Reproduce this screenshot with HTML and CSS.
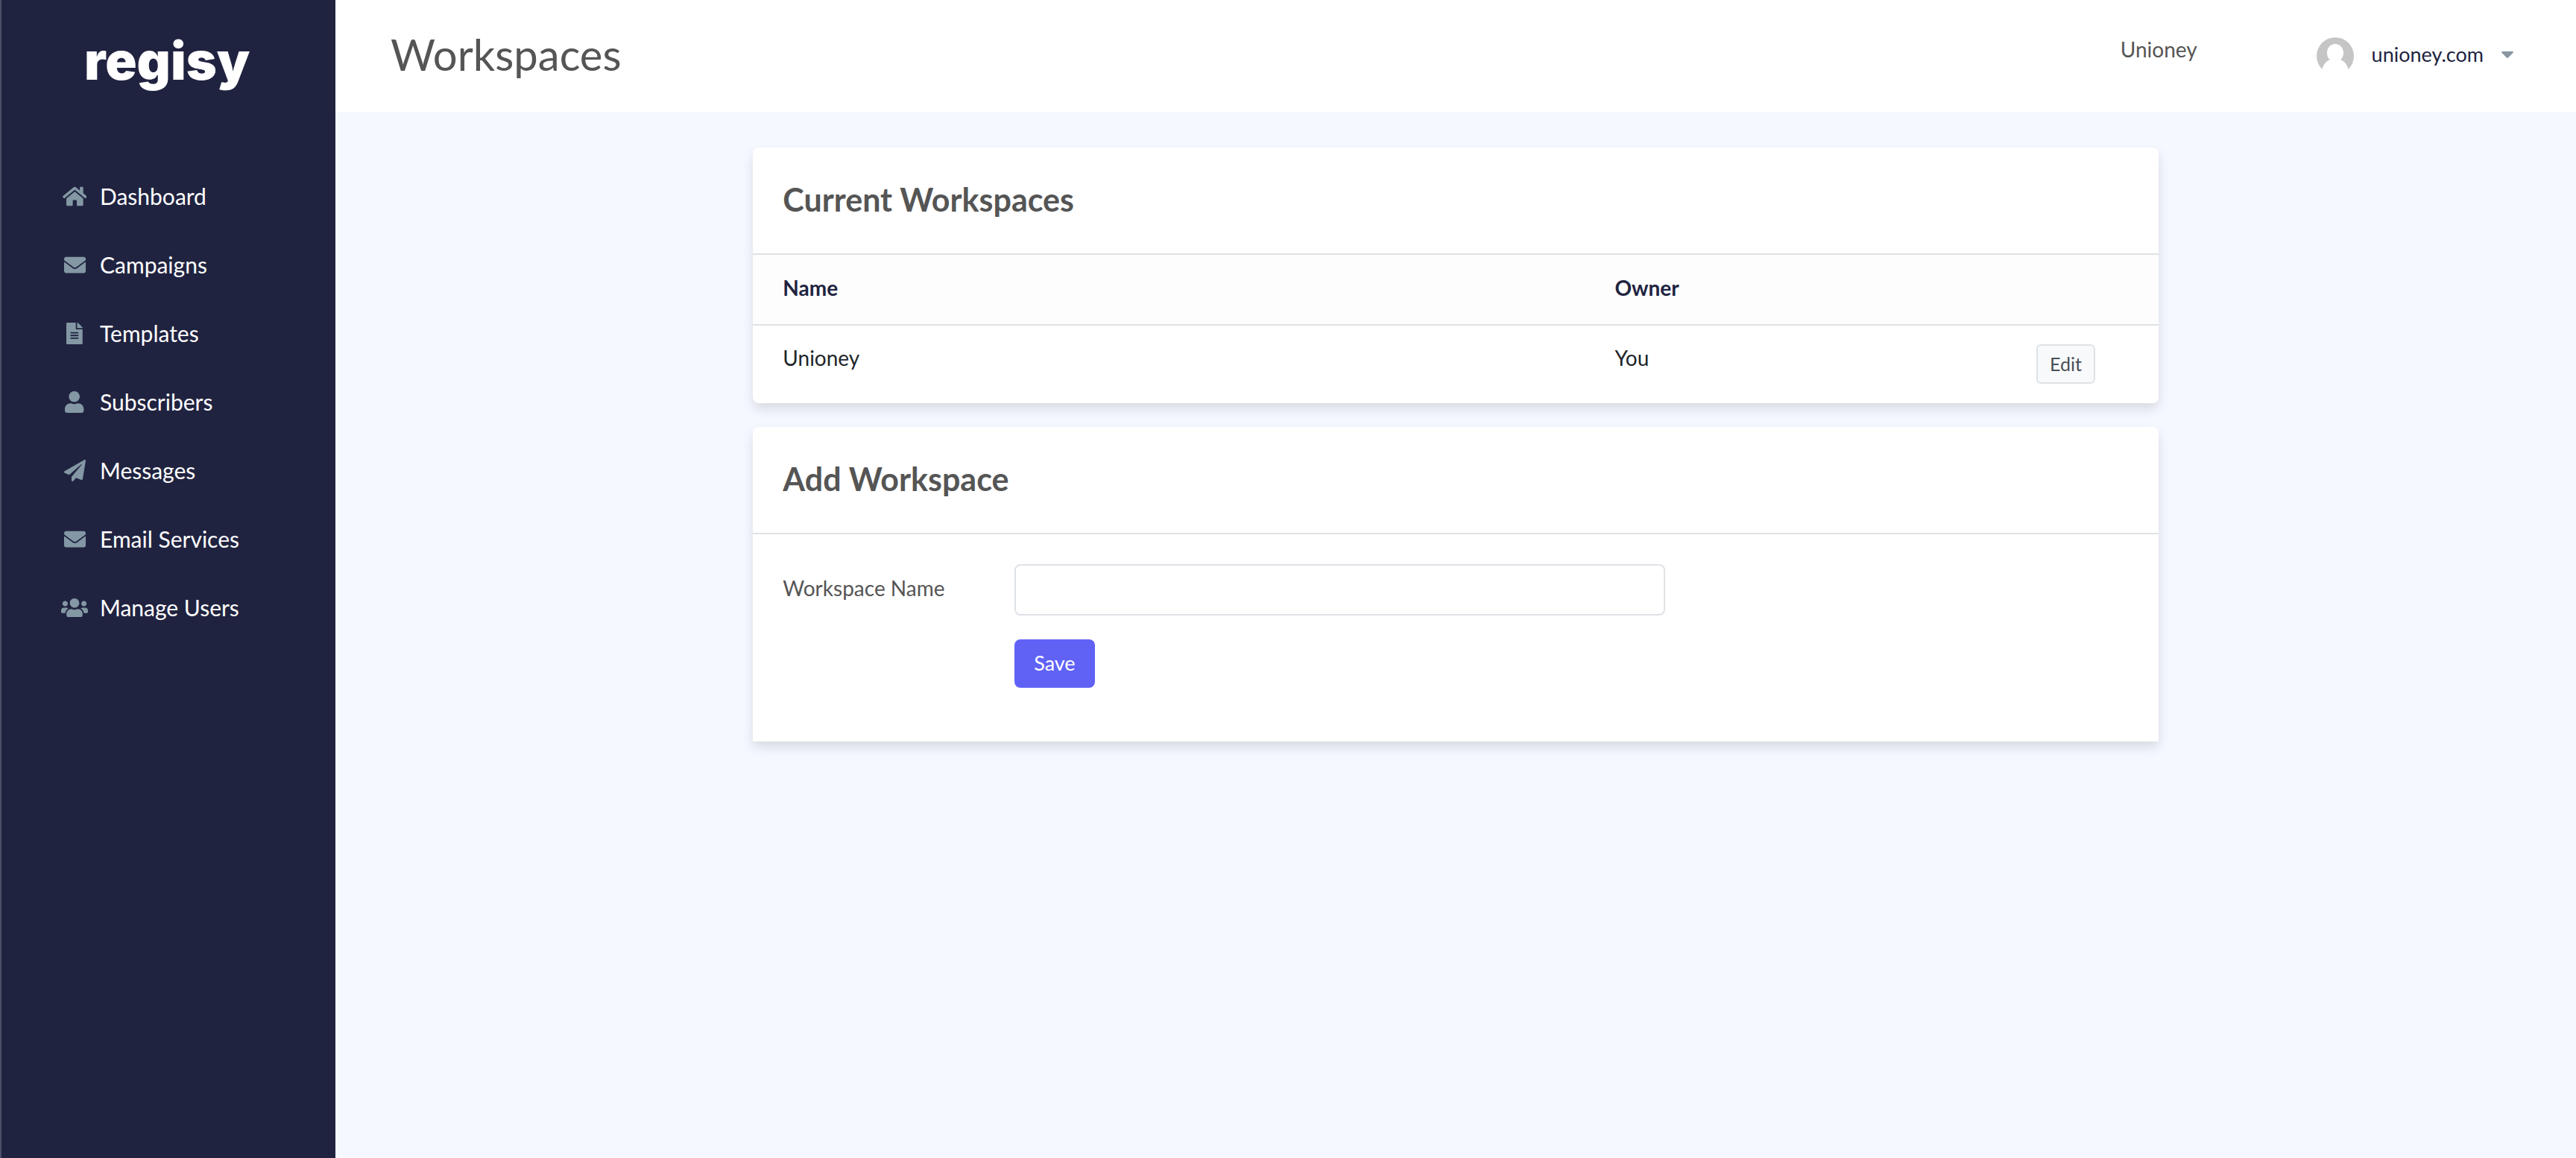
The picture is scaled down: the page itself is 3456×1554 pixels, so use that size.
FILE: index.html
```html
<!DOCTYPE html>
<html lang="en">
<head>
<meta charset="utf-8">
<title>Workspaces</title>
<link rel="stylesheet" href="styles.css">
</head>
<body>
<div class="app">
  <aside class="sidebar">
    <a class="logo" href="#">regisy</a>
    <nav class="nav">
      <a class="nav-link" href="#"><span class="nav-icon"><svg viewBox="0 0 576 512"><path d="M488 312.7V456c0 13.3-10.7 24-24 24H348c-6.600 0-12-5.400-12-12V356c0-6.600-5.400-12-12-12h-72c-6.600 0-12 5.400-12 12v112c0 6.600-5.400 12-12 12H112c-13.300 0-24-10.700-24-24V312.700c0-3.600 1.600-7 4.400-9.300l188-154.800c4.400-3.600 10.800-3.600 15.300 0l188 154.800c2.700 2.300 4.300 5.700 4.300 9.300zm83.600-60.900L488 182.900V44.400c0-6.600-5.400-12-12-12h-56c-6.600 0-12 5.400-12 12V117l-89.500-73.700c-17.700-14.600-43.300-14.600-61 0L4.400 251.800c-5.100 4.200-5.800 11.800-1.600 16.900l25.500 31c4.200 5.100 11.800 5.800 16.900 1.600l235.200-193.700c4.400-3.600 10.800-3.600 15.300 0l235.200 193.700c5.100 4.200 12.700 3.500 16.900-1.600l25.500-31c4.200-5.200 3.400-12.700-1.700-16.900z"/></svg></span>Dashboard</a>
      <a class="nav-link" href="#"><span class="nav-icon"><svg viewBox="0 0 512 512"><path d="M502.3 190.8c3.9-3.1 9.700-.2 9.700 4.700V400c0 26.500-21.500 48-48 48H48c-26.500 0-48-21.500-48-48V195.600c0-5 5.700-7.800 9.700-4.700 22.400 17.400 52.100 39.500 154.100 113.600 21.100 15.400 56.700 47.800 92.200 47.600 35.700.3 72-32.800 92.300-47.600 102-74.100 131.600-96.300 154-113.700zM256 320c23.200.4 56.600-29.200 73.400-41.400 132.700-96.300 142.800-104.700 173.400-128.700 5.800-4.500 9.200-11.500 9.200-18.900v-19c0-26.500-21.500-48-48-48H48c-26.500 0-48 21.500-48 48v19c0 7.400 3.400 14.300 9.200 18.900 30.600 23.900 40.700 32.400 173.400 128.700 16.800 12.200 50.200 41.800 73.400 41.400z"/></svg></span>Campaigns</a>
      <a class="nav-link" href="#"><span class="nav-icon"><svg viewBox="0 0 384 512"><path d="M224 136V0H24C10.700 0 0 10.700 0 24v464c0 13.300 10.700 24 24 24h336c13.300 0 24-10.700 24-24V160H248c-13.200 0-24-10.800-24-24zm64 236c0 6.600-5.400 12-12 12H108c-6.600 0-12-5.400-12-12v-8c0-6.600 5.400-12 12-12h168c6.600 0 12 5.400 12 12v8zm0-64c0 6.600-5.400 12-12 12H108c-6.600 0-12-5.400-12-12v-8c0-6.600 5.400-12 12-12h168c6.600 0 12 5.400 12 12v8zm0-72v8c0 6.600-5.400 12-12 12H108c-6.600 0-12-5.400-12-12v-8c0-6.600 5.400-12 12-12h168c6.600 0 12 5.400 12 12zm96-114.100v6.100H256V0h6.100c6.400 0 12.500 2.500 17 7l97.900 98c4.500 4.500 7 10.600 7 16.900z"/></svg></span>Templates</a>
      <a class="nav-link" href="#"><span class="nav-icon"><svg viewBox="0 0 448 512"><path d="M224 256c70.700 0 128-57.300 128-128S294.700 0 224 0 96 57.300 96 128s57.300 128 128 128zm89.600 32h-16.700c-22.200 10.200-46.900 16-72.900 16s-50.600-5.800-72.900-16h-16.700C60.200 288 0 348.200 0 422.400V464c0 26.500 21.500 48 48 48h352c26.500 0 48-21.500 48-48v-41.600c0-74.200-60.200-134.400-134.400-134.400z"/></svg></span>Subscribers</a>
      <a class="nav-link" href="#"><span class="nav-icon"><svg viewBox="0 0 512 512"><path d="M476 3.200L12.500 270.600c-18.100 10.400-15.800 35.600 2.200 43.200L121 358.400l287.300-253.200c5.500-4.900 13.300 2.600 8.600 8.300L176 407v80.500c0 23.600 28.500 32.900 42.500 15.800L282 426l124.600 52.200c14.200 6 30.400-2.900 33-18.200l72-432C515 7.800 493.300-6.800 476 3.200z"/></svg></span>Messages</a>
      <a class="nav-link" href="#"><span class="nav-icon"><svg viewBox="0 0 512 512"><path d="M502.3 190.8c3.900-3.100 9.700-.2 9.700 4.700V400c0 26.500-21.500 48-48 48H48c-26.500 0-48-21.500-48-48V195.600c0-5 5.700-7.800 9.700-4.700 22.400 17.400 52.100 39.500 154.100 113.600 21.100 15.400 56.700 47.800 92.200 47.600 35.700.3 72-32.800 92.300-47.600 102-74.100 131.600-96.300 154-113.700zM256 320c23.200.4 56.600-29.200 73.400-41.400 132.700-96.300 142.800-104.700 173.400-128.700 5.800-4.500 9.200-11.500 9.200-18.900v-19c0-26.500-21.500-48-48-48H48c-26.500 0-48 21.500-48 48v19c0 7.400 3.400 14.300 9.200 18.900 30.600 23.900 40.700 32.400 173.400 128.700 16.800 12.200 50.200 41.800 73.400 41.400z"/></svg></span>Email Services</a>
      <a class="nav-link" href="#"><span class="nav-icon"><svg viewBox="0 0 640 512"><path d="M96 224c35.300 0 64-28.700 64-64s-28.700-64-64-64-64 28.700-64 64 28.700 64 64 64zm448 0c35.300 0 64-28.700 64-64s-28.700-64-64-64-64 28.700-64 64 28.700 64 64 64zm32 32h-64c-17.600 0-33.500 7.100-45.100 18.600 40.300 22.100 68.900 62 75.100 109.400h66c17.700 0 32-14.300 32-32v-32c0-35.300-28.700-64-64-64zm-256 0c61.900 0 112-50.100 112-112S381.900 32 320 32 208 82.100 208 144s50.100 112 112 112zm76.800 32h-8.300c-20.800 10-43.900 16-68.500 16s-47.600-6-68.500-16h-8.300C179.600 288 128 339.600 128 403.200V432c0 26.500 21.500 48 48 48h288c26.500 0 48-21.500 48-48v-28.800c0-63.600-51.600-115.200-115.200-115.200zm-223.700-13.400C161.500 263.100 145.600 256 128 256H64c-35.300 0-64 28.700-64 64v32c0 17.700 14.300 32 32 32h65.900c6.300-47.400 34.900-87.300 75.200-109.400z"/></svg></span>Manage Users</a>
    </nav>
  </aside>
  <div class="main">
    <header class="topbar">
      <h1 class="page-title">Workspaces</h1>
      <div class="account">
        <a class="workspace-link" href="#">Unioney</a>
        <button class="user-menu" type="button">
          <svg class="avatar" viewBox="0 0 50 46"><path d="M7.500 43A25 25 0 1 1 42.500 43C41 36.500 37 32 32 30.300c2.500-2 4-5.300 4-9.300C36 14 31.500 9 25 9S14 14 14 21c0 4 1.500 7.300 4 9.300C13 32 9 36.500 7.500 43z" fill="#c5c5c5"/></svg>
          <span>unioney.com</span>
          <svg class="caret" viewBox="0 0 16 9"><path d="M1.200 0h13.600q1.800.4.800 1.800L9 8.500q-1 .8-2 0L.4 1.800Q-.6.400 1.200 0z" fill="#8a97a3"/></svg>
        </button>
      </div>
    </header>
    <main class="content">
      <section class="card">
        <h2 class="card-title">Current Workspaces</h2>
        <table class="table">
          <thead>
            <tr><th class="col-name">Name</th><th class="col-owner">Owner</th><th></th></tr>
          </thead>
          <tbody>
            <tr><td>Unioney</td><td>You</td><td><button class="btn-light" type="button">Edit</button></td></tr>
          </tbody>
        </table>
      </section>
      <section class="card card-square">
        <h2 class="card-title">Add Workspace</h2>
        <form class="form">
          <label class="form-label" for="workspace-name">Workspace Name</label>
          <input class="form-input" id="workspace-name" type="text">
          <div class="form-actions"><button class="btn-primary" type="button">Save</button></div>
        </form>
      </section>
    </main>
  </div>
</div>
</body>
</html>
```

FILE: styles.css
```css
* {
  box-sizing: border-box;
}

body {
  margin: 0;
  background: #f5f8ff;
  color: #555;
  font-family: Lato, sans-serif;
  font-size: 28px;
  line-height: 36px;
}

a {
  color: inherit;
  text-decoration: none;
}

button,
input {
  font: inherit;
}

.app {
  display: flex;
  min-height: 100vh;
}

.sidebar {
  flex: 0 0 450px;
  background: #202340;
  border-left: 2px solid #4b4f66;
  color: #fff;
}

.logo {
  display: block;
  padding: 37px 0 0 111px;
  font-family: Inter, sans-serif;
  font-size: 70px;
  font-weight: 900;
  line-height: 90px;
}

.nav {
  display: flex;
  flex-direction: column;
  padding: 90px 0 0 80px;
}

.nav-link {
  display: flex;
  align-items: center;
  gap: 16px;
  height: 92px;
  font-size: 30px;
}

.nav-icon {
  display: flex;
  justify-content: center;
  width: 36px;
  color: #8398a4;
}

.nav-icon svg {
  height: 29px;
  fill: currentColor;
}

.main {
  flex: 1;
  min-width: 0;
}

.topbar {
  display: flex;
  justify-content: space-between;
  height: 150px;
  padding: 0 74px;
  background: #fff;
}

.page-title {
  margin: 0;
  font-size: 58px;
  font-weight: 400;
  line-height: 146px;
}

.account {
  display: flex;
  align-items: flex-start;
  gap: 160px;
  padding-top: 50px;
}

.workspace-link {
  line-height: 32px;
}

.user-menu {
  display: flex;
  align-items: center;
  gap: 24px;
  padding: 0 10px 0 0;
  border: 0;
  background: none;
  color: #202340;
  font-size: 27px;
}

.avatar {
  width: 50px;
  height: 46px;
}

.caret {
  width: 16px;
  height: 9px;
}

.content {
  display: grid;
  grid-template-columns: repeat(12, 1fr);
  gap: 32px 60px;
  padding: 48px 74px;
}

.card {
  grid-column: 3 / span 8;
  border-radius: 8px;
  background: #fff;
  box-shadow: 0 8px 16px rgba(0, 0, 0, 0.12);
}

.card-square {
  border-radius: 8px 8px 0 0;
}

.card-title {
  margin: 0;
  padding: 42px 40px 44px;
  border-bottom: 2px solid #dee2e6;
  font-size: 43px;
  font-weight: 700;
  line-height: 56px;
}

.table {
  width: 100%;
  table-layout: fixed;
  border-collapse: separate;
  border-spacing: 0;
  color: #212529;
}

.table th {
  padding: 26px 40px 31px;
  border-bottom: 2px solid #dee2e6;
  background: #fdfdfd;
  color: #202340;
  font-weight: 700;
  text-align: left;
}

.table td {
  padding: 25px 40px 26px;
  vertical-align: top;
}

.col-name {
  width: 59.2%;
}

.col-owner {
  width: 30%;
}

.btn-light {
  display: block;
  height: 53px;
  padding: 0 16px 2px;
  border: 2px solid #dee2e6;
  border-radius: 6px;
  background: #f8f9fb;
  color: #495057;
  font-size: 25px;
}

.form {
  display: grid;
  grid-template-columns: repeat(12, 1fr);
  gap: 32px 60px;
  padding: 40px 40px 72px;
}

.form-label {
  grid-column: span 2;
  padding-top: 14px;
  white-space: nowrap;
}

.form-input {
  grid-column: span 6;
  width: 100%;
  height: 69px;
  padding: 0 24px;
  border: 2px solid #dee2e6;
  border-radius: 8px;
  background: #fff;
}

.form-actions {
  grid-column: 3 / span 6;
}

.btn-primary {
  display: block;
  height: 65px;
  padding: 0 26px 2px;
  border: 0;
  border-radius: 8px;
  background: #6062f6;
  color: #fff;
  font-size: 27px;
}
```
